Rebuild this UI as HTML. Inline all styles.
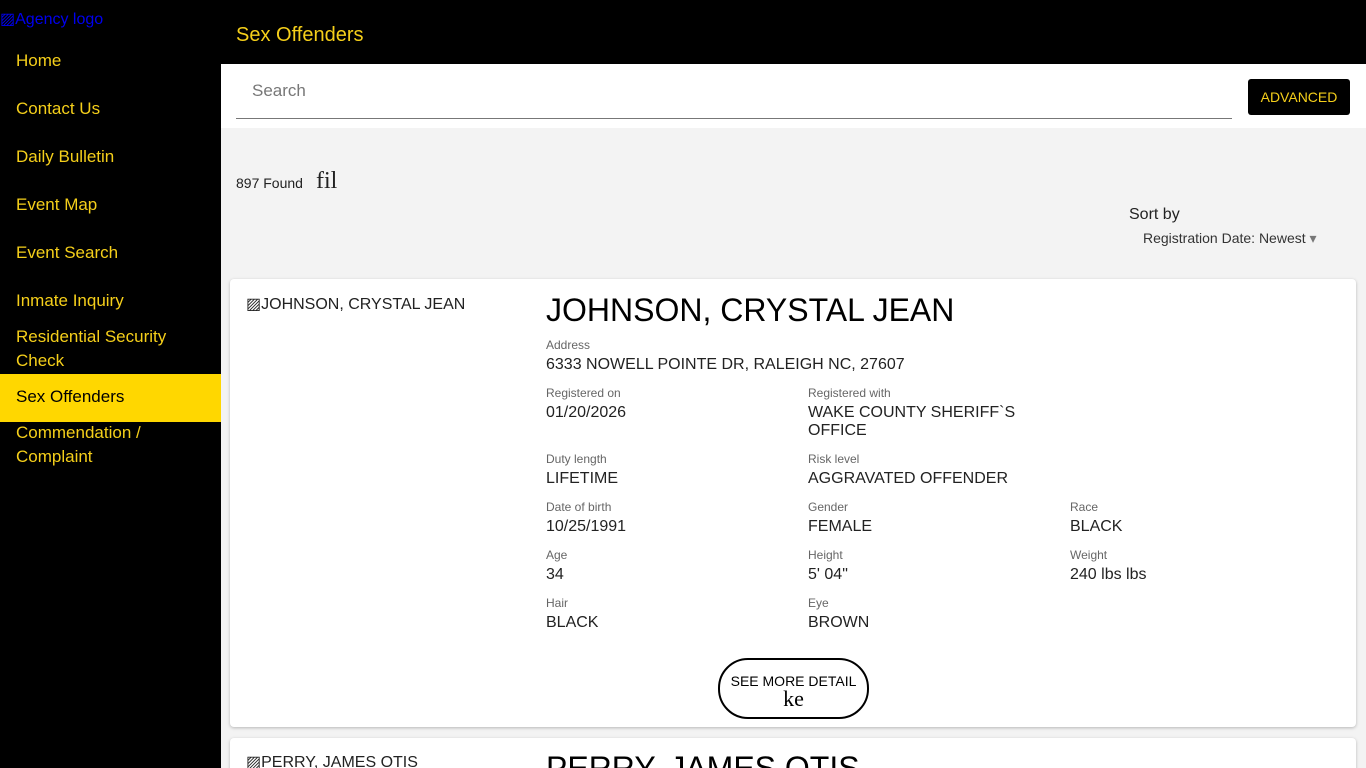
<!DOCTYPE html>
<html style="width:1366px;height:768px;overflow:hidden"><head><style>
*{margin:0;padding:0;box-sizing:border-box}
body{width:1366px;height:768px;overflow:hidden;background:#f3f3f3;font-family:"Liberation Sans",Arial,sans-serif;position:relative}
.side{position:absolute;left:0;top:0;width:221px;height:768px;background:#000}
.logo{position:absolute;left:0;top:9px;color:#00e;font-size:16px}
.nav a{position:absolute;left:16px;color:#f5cf1a;font-size:17px;text-decoration:none;line-height:24px}
.active{position:absolute;left:0;top:374px;width:221px;height:48px;background:#ffd700}
.top{position:absolute;left:221px;top:0;right:0;height:64px;background:#000}
.top span{position:absolute;left:15px;top:24px;color:#f5cf1a;font-size:20px}
.sbar{position:absolute;left:221px;top:64px;right:0;height:64px;background:#fff}
.sbar .in{position:absolute;left:15px;top:0;width:996px;height:55px;border-bottom:1px solid #777}
.sbar .in span{position:absolute;left:16px;top:17px;font-size:17px;color:#777}
.adv{position:absolute;left:1027px;top:15px;width:102px;height:36px;background:#000;border-radius:3px;color:#f5cf1a;font-size:14px;text-align:center;line-height:36px}
.abs{position:absolute}
.card{position:absolute;left:230px;background:#fff;width:1126px;border-radius:4px;box-shadow:0 1px 3px rgba(0,0,0,.25);overflow:hidden}
.l{position:absolute;font-size:12px;color:#666}
.v{position:absolute;font-size:16px;color:#222;line-height:18px}
</style></head><body>
<div class="side">
<div class="logo">▨Agency logo</div>
<div class="active"></div>
<div class="nav">
<a style="top:49px">Home</a>
<a style="top:97px">Contact Us</a>
<a style="top:145px">Daily Bulletin</a>
<a style="top:193px">Event Map</a>
<a style="top:241px">Event Search</a>
<a style="top:289px">Inmate Inquiry</a>
<a style="top:325px">Residential Security<br>Check</a>
<a style="top:385px;color:#000">Sex Offenders</a>
<a style="top:421px">Commendation /<br>Complaint</a>
</div></div>
<div class="top"><span>Sex Offenders</span></div>
<div class="sbar"><div class="in"><span>Search</span></div><div class="adv">ADVANCED</div></div>
<div class="abs" style="left:236px;top:175px;font-size:14px;color:#222">897 Found</div>
<div class="abs" style="left:316px;top:168px;font-family:'Liberation Serif',serif;font-size:24px;color:#222">fil</div>
<div class="abs" style="left:1129px;top:206px;font-size:16px;color:#222">Sort by</div>
<div class="abs" style="left:1143px;top:230px;font-size:14px;color:#333">Registration Date: Newest <span style="color:#777">▾</span></div>
<div class="card" style="top:279px;height:448px">
<div class="abs" style="left:16px;top:15px;font-size:16px;color:#222">▨JOHNSON, CRYSTAL JEAN</div>
<div class="abs" style="left:316px;top:13px;font-size:32px;color:#000">JOHNSON, CRYSTAL JEAN</div>
<div class="l" style="left:316px;top:59px">Address</div><div class="v" style="left:316px;top:77px">6333 NOWELL POINTE DR, RALEIGH NC, 27607</div>
<div class="l" style="left:316px;top:107px">Registered on</div><div class="v" style="left:316px;top:125px">01/20/2026</div>
<div class="l" style="left:578px;top:107px">Registered with</div><div class="v" style="left:578px;top:125px">WAKE COUNTY SHERIFF`S<br>OFFICE</div>
<div class="l" style="left:316px;top:173px">Duty length</div><div class="v" style="left:316px;top:191px">LIFETIME</div>
<div class="l" style="left:578px;top:173px">Risk level</div><div class="v" style="left:578px;top:191px">AGGRAVATED OFFENDER</div>
<div class="l" style="left:316px;top:221px">Date of birth</div><div class="v" style="left:316px;top:239px">10/25/1991</div>
<div class="l" style="left:578px;top:221px">Gender</div><div class="v" style="left:578px;top:239px">FEMALE</div>
<div class="l" style="left:840px;top:221px">Race</div><div class="v" style="left:840px;top:239px">BLACK</div>
<div class="l" style="left:316px;top:269px">Age</div><div class="v" style="left:316px;top:287px">34</div>
<div class="l" style="left:578px;top:269px">Height</div><div class="v" style="left:578px;top:287px">5' 04"</div>
<div class="l" style="left:840px;top:269px">Weight</div><div class="v" style="left:840px;top:287px">240 lbs lbs</div>
<div class="l" style="left:316px;top:317px">Hair</div><div class="v" style="left:316px;top:335px">BLACK</div>
<div class="l" style="left:578px;top:317px">Eye</div><div class="v" style="left:578px;top:335px">BROWN</div>
<div class="abs" style="left:488px;top:379px;width:151px;height:61px;border:2px solid #000;border-radius:30px;text-align:center">
<div style="font-size:14px;margin-top:13px;color:#000">SEE MORE DETAIL</div>
<div style="font-family:'Liberation Serif',serif;font-size:22px;line-height:20px">ke</div></div>
</div>
<div class="card" style="top:738px;height:60px">
<div class="abs" style="left:16px;top:14px;font-size:16px;color:#222">▨PERRY, JAMES OTIS</div>
<div class="abs" style="left:316px;top:12px;font-size:32px;color:#000">PERRY, JAMES OTIS</div>
</div>
</body></html>
